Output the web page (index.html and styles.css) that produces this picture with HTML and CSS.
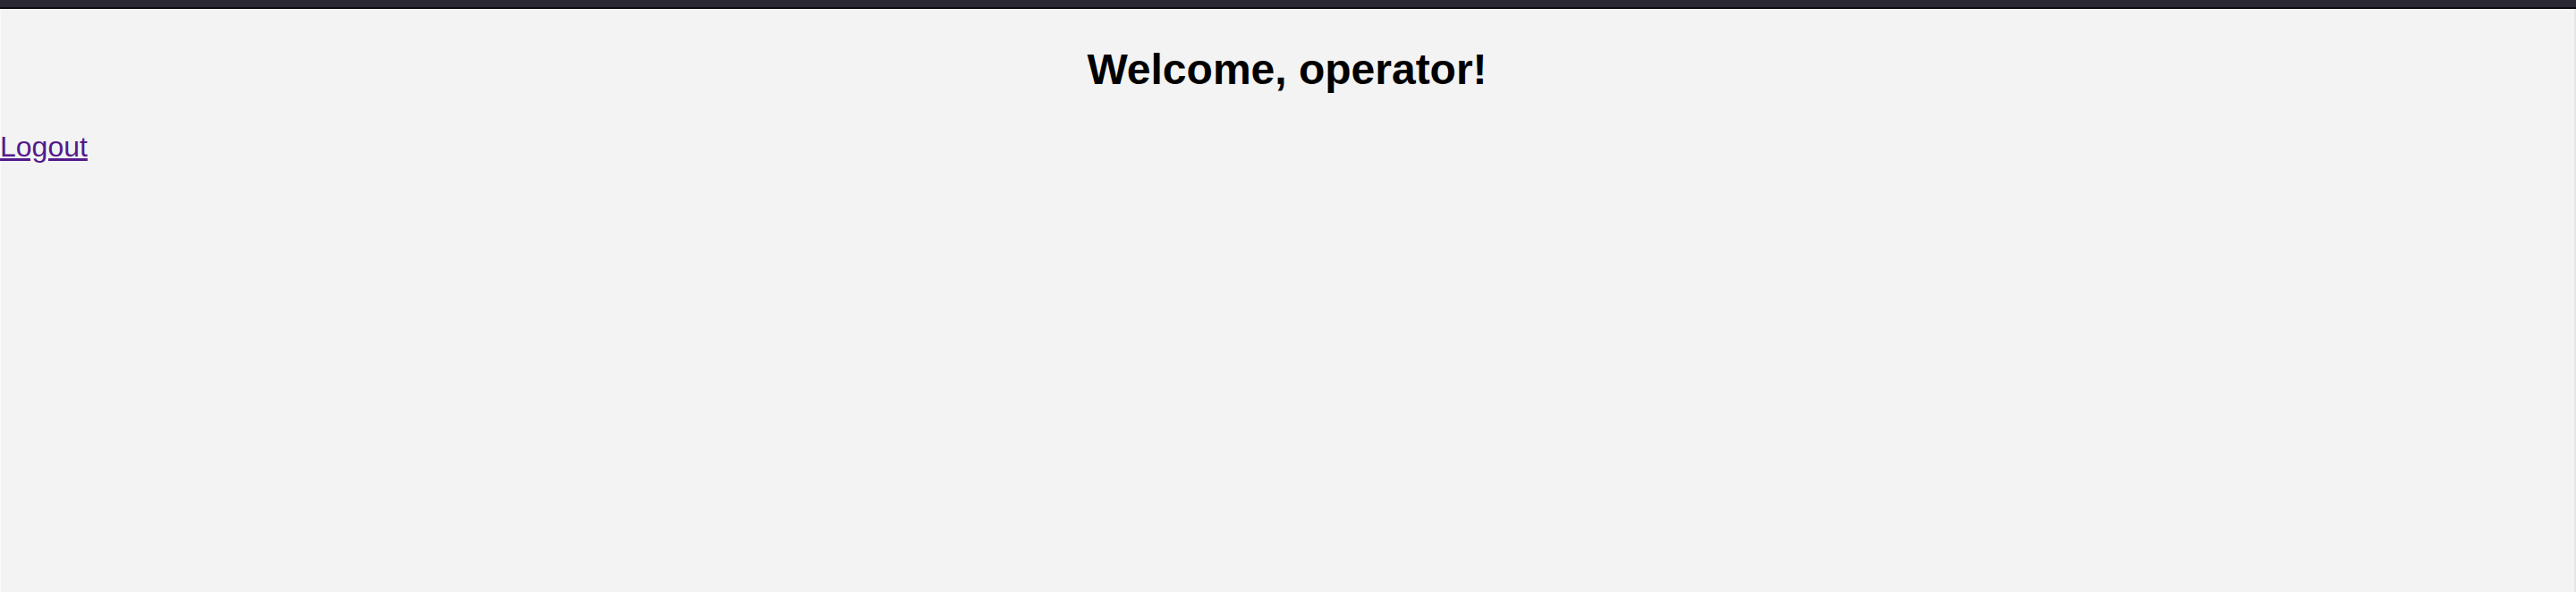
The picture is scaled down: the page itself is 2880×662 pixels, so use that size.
FILE: index.html
```html
<!DOCTYPE html>
<html lang="en">
<head>
<meta charset="utf-8">
<title>Welcome</title>
<link rel="stylesheet" href="styles.css">
</head>
<body>
<div class="page">
  <header class="topbar"></header>
  <main class="content">
    <h1 class="welcome">Welcome, operator!</h1>
    <a class="logout" href="#logout">Logout</a>
  </main>
</div>
</body>
</html>
```
FILE: styles.css
```css
html, body {
  margin: 0;
  padding: 0;
  height: 100%;
}
body {
  background: #f3f3f3;
  font-family: "Liberation Sans", Arial, sans-serif;
  font-size: 24px;
  color: #000;
}
.page {
  min-height: 100%;
  display: flex;
  flex-direction: column;
  border-left: 1px solid #fafafa;
  border-right: 2px solid #e6e6e6;
  box-sizing: border-box;
}
.topbar {
  height: 8px;
  background: #2a2833;
  border-bottom: 2px solid #0c0c0f;
  margin: 0 -2px 0 -1px;
}
.content {
  display: flex;
  flex-direction: column;
  align-items: flex-start;
  margin-left: -1px;
}
.welcome {
  align-self: stretch;
  text-align: center;
  font-size: 48px;
  font-weight: bold;
  margin: 40px 0 41px;
  line-height: normal;
}
.logout {
  font-size: 32px;
  color: #551a8b;
  text-decoration: underline;
  line-height: normal;
}
```
